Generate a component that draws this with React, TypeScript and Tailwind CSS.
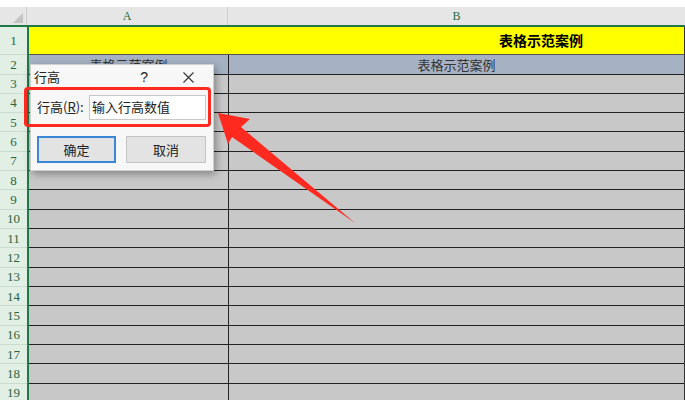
const rows = Array.from({ length: 17 }, (_, i) => i + 3);

function RowHead({ n, h }: { n: number; h: string }) {
  return (
    <div
      className={`${h} w-[27px] shrink-0 flex items-center justify-center border-b border-[#c9dccf] bg-[#e1efe5] text-[13px] text-[#2a6440]`}
      style={{ fontFamily: '"Liberation Serif", "DejaVu Serif", serif' }}
    >
      {n}
    </div>
  );
}

function Arrow() {
  return (
    <svg className="absolute left-0 top-0 pointer-events-none" width="685" height="400">
      <polygon
        points="218,113 250,119 241,127 355,223 232,137 228,144"
        fill="#ff2a1f"
      />
    </svg>
  );
}

function Dialog() {
  return (
    <div className="absolute left-[30px] top-[64px] w-[184px] h-[107px] bg-[#f7f7f7] border border-[#d0d0d0] shadow-[2px_3px_8px_rgba(0,0,0,0.35)] text-[13px] text-[#222]">
      <div className="flex items-center h-[24px] pl-[3px] pr-[19px]">
        <span className="flex-1">行高</span>
        <span className="mr-[35px] text-[14px]" style={{ fontFamily: '"Liberation Sans", sans-serif' }}>?</span>
        <svg width="11" height="11" viewBox="0 0 11 11">
          <path d="M0.5 0.5 L10.5 10.5 M10.5 0.5 L0.5 10.5" stroke="#333" strokeWidth="1.1" />
        </svg>
      </div>
    </div>
  );
}

export default function App() {
  return (
    <div
      className="relative w-[685px] h-[400px] overflow-hidden bg-white"
      style={{ fontFamily: '"Noto Sans CJK SC", "Noto Sans", sans-serif' }}
    >
      <div className="h-[7px]" />
      {/* column headers */}
      <div className="flex h-[20px] border-b-2 border-[#1f7a48] bg-[#e6e6e6]" style={{ fontFamily: '"Liberation Serif", serif' }}>
        <div className="w-[27px] shrink-0 relative bg-[#e6e6e6] border-r border-[#cfcfcf]">
          <div className="absolute right-[3px] bottom-[2px] w-0 h-0 border-l-[10px] border-l-transparent border-b-[10px] border-b-[#c4c4c4]" />
        </div>
        <div className="w-[201px] shrink-0 flex items-center justify-center text-[12px] text-[#1f6b40] border-r border-[#cfcfcf]">A</div>
        <div className="flex-1 flex items-center justify-center text-[12px] text-[#1f6b40]">B</div>
      </div>
      <div className="flex">
        <div className="flex flex-col border-r-2 border-[#1f7a48]">
          <RowHead n={1} h="h-[28px]" />
          <RowHead n={2} h="h-[19.5px]" />
          {rows.map((n) => (
            <RowHead key={n} n={n} h="h-[19.33px]" />
          ))}
        </div>
        <div className="flex-1 flex flex-col border-r border-[#333]">
          <div className="h-[28px] bg-[#ffff00] border-b border-[#555] flex items-center justify-end pr-[101px] text-[14px] font-bold text-black">
            表格示范案例
          </div>
          <div className="h-[19.5px] flex bg-[#a6b2c4] border-b border-[#222] text-[13px] text-[#333]">
            <div className="w-[200px] shrink-0 flex items-center justify-center border-r border-[#222]">表格示范案例</div>
            <div className="flex-1 flex items-center justify-center">表格示范案例</div>
          </div>
          {rows.map((n) => (
            <div key={n} className="h-[19.33px] flex bg-[#c8c8c8] border-b border-[#222]">
              <div className="w-[200px] shrink-0 border-r border-[#222]" />
              <div className="flex-1" />
            </div>
          ))}
        </div>
      </div>

      <Dialog />
      {/* red highlight box and form row */}
      <div className="absolute left-[24px] top-[87px] w-[187px] h-[40px] border-[3px] border-[#ff2a1f] rounded-[4px] flex items-center pl-[10px] pr-[2px] text-[13px] text-[#222]">
        <span className="w-[52px]">
          行高(<span className="underline">R</span>):
        </span>
        <div className="flex-1 h-[25px] bg-white border border-[#c8c8c8] flex items-center pl-[2px]">输入行高数值</div>
      </div>
      <div className="absolute left-[37px] top-[136px] flex gap-[10px] text-[13px] text-[#222]">
        <button className="w-[79px] h-[27px] border-2 border-[#3c86d6] bg-[#e3e3e3]">确定</button>
        <button className="w-[80px] h-[27px] border border-[#c4c4c4] bg-[#e3e3e3]">取消</button>
      </div>
      <Arrow />
    </div>
  );
}
